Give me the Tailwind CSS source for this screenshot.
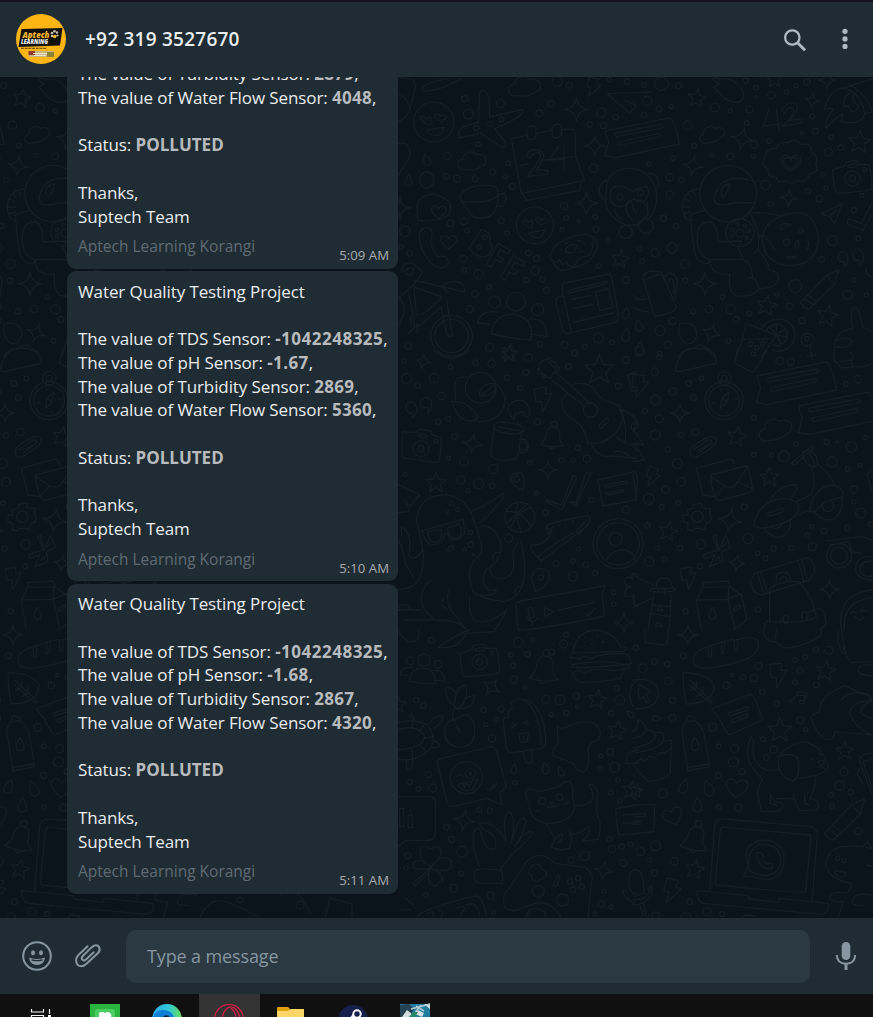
<!DOCTYPE html>
<html lang="en">
<head>
<meta charset="utf-8">
<title>+92 319 3527670</title>
<script src="https://cdn.jsdelivr.net/npm/@tailwindcss/browser@4"></script>
</head>
<body class="w-[873px] h-[1017px] overflow-hidden bg-[#0b141a] font-['Open_Sans','Noto_Sans',sans-serif]">
<div class="flex h-[1017px] w-[873px] flex-col">
  <header class="flex h-[77px] shrink-0 items-center border-t-2 border-[#15111c] bg-[#202c33] pl-4 pr-[18px]">
    <svg class="mb-[2px] size-[50px] shrink-0" viewBox="0 0 50 50">
      <circle cx="25" cy="25" r="25" fill="#fdb515"/>
      <path d="M5.500 15L46.500 14L44 31.500L2.500 33Z" fill="#11100d"/>
      <text x="6.500" y="23.500" font-size="8.500" font-weight="800" font-style="italic" fill="#f7b52c" textLength="27" lengthAdjust="spacingAndGlyphs">Aptech</text>
      <text x="5" y="30" font-size="6" font-weight="800" font-style="italic" fill="#eee" textLength="27" lengthAdjust="spacingAndGlyphs">LEARNING</text>
      <g fill="#c7c2ad"><circle cx="36" cy="19" r="1.300"/><circle cx="38.500" cy="17.200" r="1.300"/><circle cx="41" cy="18.500" r="1.200"/><circle cx="36" cy="22" r="1.200"/><circle cx="41.500" cy="21.500" r="1.100"/><circle cx="38.700" cy="22.500" r="1.800" fill="#fdb515"/></g>
      <path d="M5 34.300h26" stroke="#7d570c" stroke-width="1.200" stroke-dasharray="3 .7"/>
      <path d="M12.500 37H38v6H12.500z" fill="#c5b480"/><path d="M12.500 37H19v4h-6.500z" fill="#8d3b28"/><path d="M31 38h7v5h-7z" fill="#8b8432"/>
      <path d="M17 39.500h14M18 41.500h12" stroke="#eee8d7" stroke-width="1"/>
    </svg>
    <div class="ml-[19px] flex-1 whitespace-nowrap text-[19px] font-semibold tracking-[0.240px] text-[#e9edef]">+92 319 3527670</div>
    <svg class="mr-[28px] h-[24px] w-[24px]" viewBox="0 0 24 24" fill="none" stroke="#aebac1"><circle cx="9.300" cy="9.500" r="7.200" stroke-width="2.300"/><path d="M14.600 14.800L22 22.200" stroke-width="2.900"/></svg>
    <svg class="mb-[2px] h-[22px] w-[20px]" viewBox="0 0 20 22" fill="#aebac1"><circle cx="10" cy="3.300" r="2.600"/><circle cx="10" cy="10.900" r="2.600"/><circle cx="10" cy="18.400" r="2.600"/></svg>
  </header>

  <main class="relative h-[841px] shrink-0 overflow-hidden">
    <svg class="absolute inset-0" width="873" height="841" viewBox="0 77 873 841" fill="none" stroke="#161e25" stroke-linejoin="round" stroke-linecap="round">
      <defs>
        <path id="star" d="M0-30L8-9L30-7L13 7L19 29L0 17L-19 29L-13 7L-30-7L-8-9Z"/>
        <path id="spark" d="M0-36Q2-3 36 0Q3 4 0 36Q-3 4-36 0Q-3-3 0-36Z"/>
        <path id="drop" d="M0-22Q-26 20 0 22Q26 20 0-22Z"/>
        <path id="heart" d="M0 26Q-42-5-25-20Q-10-30 0-12Q10-30 25-20Q42-5 0 26Z"/>
        <path id="cloud" d="M-40 24C-60 5-42-10-30-8C-25-35 10-36 16-19C50-25 60 15 30 20C10 35-15 28-40 24Z"/>
        <path id="bolt" d="M-18-34L18-30L12-10L30-8L-10 40L-6 8L-22 5Z"/>
        <g id="bell"><path d="M-40 28Q-22 10-22-10Q-16-42 4-38Q28-35 25-5Q26 15 42 25Q10 40-40 28ZM-10 32q10 18 24 0"/><circle cx="3" cy="-47" r="10"/></g>
        <g id="camera"><path d="M-58-36L-20-42L-12-54L20-54L27-40L56-36Q64-32 58 40Q50 48-55 40Q-62 36-58-36Z"/><circle r="24"/><circle r="10"/><ellipse cx="6" cy="-39" rx="15" ry="5"/><circle cx="44" cy="-22" r="6"/></g>
        <g id="people"><circle r="28"/><path d="M-68 100Q-65 40-5 38Q60 45 50 112Q-5 112-68 100Z"/><circle cx="-64" cy="4" r="18"/><path d="M-75 72L-112 70Q-105 28-52 35M45 50Q92 40 98 100L52 94"/><circle cx="66" cy="20" r="18"/></g>
        <g id="note"><path d="M-110-30L90-70Q110-68 122 12L-80 55L-112 48L-100 5Q-108-10-110-30Z"/><path d="M-75-18L65-44M-65 10L58-16" stroke-width="15"/><path d="M-75-18L65-44M-65 10L58-16" stroke="#0b141a" stroke-width="8"/></g>
        <g id="love"><circle r="57"/><path d="M-10 10Q-42-5-37-15Q-28-20-22-9Q-10-20-7-7ZM22 0Q-4-15 5-23Q15-27 18-16Q34-26 36-13ZM-20 23Q10 18 30 15Q24 42 3 38Q-13 38-20 23Z"/></g>
        <g id="pencil"><path d="M-55 40L20-38L55-53L42-10L-28 57Q-42 63-55 40ZM20-38L42-10M-45 29L-18 48M-34 19L-8 38"/></g>
      </defs>
      <g id="doodles"></g>
      <use href="#doodles" x="-675"/>
      <g transform="translate(0 890)" stroke-width="1.300"><circle cx="240" cy="10" r="3"/><circle cx="300" cy="15" r="4"/><path d="M200 28q10-24 30-15t30 15M325 28l5-20l22 6v14M280 5q18-12 30 18"/></g>
    </svg>

    <div class="relative flex h-full flex-col justify-end gap-[2.500px] pb-[24.500px] pl-[67px]">
      <article class="flex h-[310px] w-[331px] shrink-0 flex-col whitespace-nowrap rounded-[9px] bg-[#202c33] px-[11px] pt-[8.500px] text-[17px] leading-[23.750px] tracking-[-0.100px] text-[#e9edef]">
        <p>Water Quality Testing Project</p><p>&nbsp;</p>
        <p>The value of TDS Sensor: <b class="tracking-[0.500px] text-[#b7bbbe]">-1042248325</b>,</p>
        <p>The value of pH Sensor: <b class="tracking-[0.400px] text-[#b7bbbe]">-1.66</b>,</p>
        <p>The value of Turbidity Sensor: <b class="tracking-[0.300px] text-[#b7bbbe]">2879</b>,</p>
        <p>The value of Water Flow Sensor: <b class="tracking-[0.300px] text-[#b7bbbe]">4048</b>,</p><p>&nbsp;</p>
        <p>Status: <b class="tracking-normal text-[#b7bbbe]">POLLUTED</b></p><p>&nbsp;</p>
        <p>Thanks,</p><p>Suptech Team</p>
        <div class="flex justify-between pt-[7px] tracking-normal"><span class="text-[15.500px] text-[#5f6b73]">Aptech Learning Korangi</span><span class="-mr-[2px] mt-[9px] text-[13.200px] text-[#a5abaf]">5:09 AM</span></div>
      </article>
      <article class="flex h-[310px] w-[331px] shrink-0 flex-col whitespace-nowrap rounded-[9px] bg-[#202c33] px-[11px] pt-[8.500px] text-[17px] leading-[23.750px] tracking-[-0.100px] text-[#e9edef]">
        <p>Water Quality Testing Project</p><p>&nbsp;</p>
        <p>The value of TDS Sensor: <b class="tracking-[0.500px] text-[#b7bbbe]">-1042248325</b>,</p>
        <p>The value of pH Sensor: <b class="tracking-[0.400px] text-[#b7bbbe]">-1.67</b>,</p>
        <p>The value of Turbidity Sensor: <b class="tracking-[0.300px] text-[#b7bbbe]">2869</b>,</p>
        <p>The value of Water Flow Sensor: <b class="tracking-[0.300px] text-[#b7bbbe]">5360</b>,</p><p>&nbsp;</p>
        <p>Status: <b class="tracking-normal text-[#b7bbbe]">POLLUTED</b></p><p>&nbsp;</p>
        <p>Thanks,</p><p>Suptech Team</p>
        <div class="flex justify-between pt-[7px] tracking-normal"><span class="text-[15.500px] text-[#5f6b73]">Aptech Learning Korangi</span><span class="-mr-[2px] mt-[9px] text-[13.200px] text-[#a5abaf]">5:10 AM</span></div>
      </article>
      <article class="flex h-[310px] w-[331px] shrink-0 flex-col whitespace-nowrap rounded-[9px] bg-[#202c33] px-[11px] pt-[8.500px] text-[17px] leading-[23.750px] tracking-[-0.100px] text-[#e9edef]">
        <p>Water Quality Testing Project</p><p>&nbsp;</p>
        <p>The value of TDS Sensor: <b class="tracking-[0.500px] text-[#b7bbbe]">-1042248325</b>,</p>
        <p>The value of pH Sensor: <b class="tracking-[0.400px] text-[#b7bbbe]">-1.68</b>,</p>
        <p>The value of Turbidity Sensor: <b class="tracking-[0.300px] text-[#b7bbbe]">2867</b>,</p>
        <p>The value of Water Flow Sensor: <b class="tracking-[0.300px] text-[#b7bbbe]">4320</b>,</p><p>&nbsp;</p>
        <p>Status: <b class="tracking-normal text-[#b7bbbe]">POLLUTED</b></p><p>&nbsp;</p>
        <p>Thanks,</p><p>Suptech Team</p>
        <div class="flex justify-between pt-[7px] tracking-normal"><span class="text-[15.500px] text-[#5f6b73]">Aptech Learning Korangi</span><span class="-mr-[2px] mt-[9px] text-[13.200px] text-[#a5abaf]">5:11 AM</span></div>
      </article>
    </div>
  </main>

  <footer class="flex h-[76px] shrink-0 items-center bg-[#202c33] pl-[22px] pr-[15px]">
    <svg class="size-[30px]" viewBox="0 0 30 30" fill="none" stroke="#8696a0"><circle cx="15" cy="15" r="13.800" stroke-width="2"/><ellipse cx="11" cy="11.700" rx="2" ry="2.500" fill="#8696a0" stroke="none"/><ellipse cx="19" cy="11.700" rx="2" ry="2.500" fill="#8696a0" stroke="none"/><path d="M7 16.500Q15 19.500 23 16.500Q22 24 15 24T7 16.500Z" fill="#8696a0" stroke="none"/><path d="M9.500 18.800Q15 20.500 20.500 18.800" stroke="#202c33" stroke-width="1.300"/></svg>
    <svg class="ml-[22px] h-[26px] w-[28px]" viewBox="0 0 28 26" fill="none" stroke="#8696a0" stroke-width="2" stroke-linecap="round"><path d="M13.500 3.200L4.500 12C0 16.500 2.500 23.200 7.200 23.200C9.500 23.200 11 22.300 12.500 20.800L23.800 10.300C27.500 6.500 25 2.300 22 2.300C20 2.300 18.800 3.200 17.500 4.400L8.800 13C6.300 15.800 9.200 19 12 16.500L19.700 9.200"/></svg>
    <div class="ml-6 flex h-[53px] w-[684px] items-center rounded-[10px] bg-[#2a3942] pl-[21px] text-[18px] tracking-[-0.130px] text-[#8696a0]">Type a message</div>
    <svg class="ml-[25px] h-[28px] w-[22px]" viewBox="0 0 22 28" fill="none" stroke="#8696a0"><rect x="6.700" y="0" width="8.600" height="18" rx="4.300" fill="#8696a0" stroke="none"/><path d="M1.800 13Q2 21.500 11 21.700Q20 21.500 20.200 13" stroke-width="2"/><path d="M11 21.500V28" stroke-width="3"/></svg>
  </footer>

  <div class="flex h-[23px] shrink-0 overflow-hidden bg-[#101010]">
    <svg width="873" height="23" viewBox="0 994 873 23">
      <path d="M199 994h61v23h-61z" fill="#333"/>
      <path d="M31.500 1009v3h12v-3M31.500 1017v-1.500h12v1.500M49.500 1009v5" fill="none" stroke="#f5f5f5" stroke-width="1.200"/><path d="M48 1015h3v2h-3z" fill="#fff"/>
      <path d="M90 1004h30v13H90z" fill="#28b43f"/><rect x="95" y="1009" width="20" height="10" rx="3" fill="#4dcc63"/><path d="M99 1017v-3q0-2 3-2q2 0 3 1q3-2 5 0q2 1 1 4z" fill="#fff"/>
      <defs><linearGradient id="e"><stop stop-color="#2ba9ea"/><stop offset=".55" stop-color="#31c8d9"/><stop offset="1" stop-color="#67df55"/></linearGradient></defs>
      <circle cx="167" cy="1019" r="15" fill="url(#e)"/><path d="M153 1017q3-8 11-7q8 1 10 7z" fill="#0d7fd4"/><path d="M163 1017q2-3 6-1v1z" fill="#0a2037"/>
      <g fill="none" stroke="#ed174a" stroke-width="1.200"><circle cx="229" cy="1019" r="14.500"/><ellipse cx="231" cy="1021" rx="9" ry="14"/><path d="M231 1008q4 3 5 9"/></g>
      <path d="M277 1017v-9q0-1 1-1h10l2 2v8z" fill="#e0a20c"/><path d="M277 1011h11l3-2h13v8h-27z" fill="#ffd566"/>
      <circle cx="353" cy="1020" r="15" fill="#17204c"/><circle cx="357" cy="1014" r="3.700" fill="none" stroke="#f5f5f5" stroke-width="2"/><path d="M353.500 1015l-2.500 3" stroke="#fff" stroke-width="2"/>
      <path d="M400 1004h30v13h-30z" fill="#227c9e"/><path d="M400 1005l9-1l5 5l-4 8h-10z" fill="#244252"/><path d="M402 1017l5-7l5 4l-3 3zM415 1014l3-4l6 3l-2 4zM424 1004h6v5z" fill="#d5dfdf"/><path d="M411 1009l19-5M416 1006l8 5M421 1005l-7 9" stroke="#b2cad2" stroke-width="1.500"/><path d="M412 1012h6l-3 5h-5z" fill="#26876a"/>
    </svg>
  </div>
</div>
<script>
// Each tile: origin, circles "x y r", symbols "name x y scale rotation", free paths.
const tiles = [
 {o:[398,77],
  c:"200 65 9,307 80 12,211 111 15,459 80 10,424 109 10,478 13 15,514 24 9,610 107 14,575 143 8,616 146 9,653 120 8,149 237 11,587 274 13,284 285 9,146 298 8,177 305 11,323 298 6,343 328 9,331 259 7,240 202 7,498 387 11,505 422 7,543 433 5,592 420 7,492 457 6,594 457 9,630 490 6,158 439 10,198 433 10,207 461 7,310 431 9,328 469 7,21 463 16,35 529 8,9 509 7,197 546 10,199 579 7,242 592 14,391 528 8,416 545 9,412 582 12,434 607 8,384 609 7,446 640 9,274 630 7,231 651 10,215 696 10,683 609 11,30 806 11,275 811 12,425 802 8,500 804 10,530 828 8,560 809 7,601 783 15,642 796 7,274 141 7,311 128 7,235 153 8,687 14 8,633 8 7,244 511 7,261 481 7,602 567 7,666 360 9,683 465 20",
  s:"love 107 135 1.05 0,love 411 445 .97 0,spark 535 97 1 0,spark 590 206 .85 0,spark 566 379 .95 0,spark 6 393 .85 0,star 667 545 .9 10,star 335 824 .85 15,cloud 222 252 .9 -5,cloud 380 28 1 -5,drop 86 248 .8 -20,drop 32 309 .8 5,drop 230 302 .6 -10,drop 684 708 .8 10,drop 684 773 .9 10,heart 152 495 .8 0,heart 122 405 .75 0,people 354 674 1 3,bolt 584 28 .8 10",
  p:"M75 42Q120 45 190 5M75 42Q60 20 150 5 M242 135L245 48Q260 25 273 65L275 120L370 98Q395 110 290 155L325 200Q325 215 310 210L248 168L185 183Q175 160 200 148Z M340 185L385 175M418 168L460 160M492 158L525 156Q535 160 532 238L560 310L370 350L340 185M368 265L390 260M430 250L530 238M375 350L385 370L545 340L548 318 M386 160q10-20 28-10v30q-15 15-25 2zM462 155q10-20 28-10v30q-15 15-25 2z M385 240Q390 212 420 220Q455 225 415 278L450 280L448 292L388 298Q430 250 428 230Q410 220 395 245Z M482 208L453 250L505 245M498 205V280 M185 365Q190 330 250 325Q310 320 298 355Q285 378 195 375ZM190 372L225 418Q240 428 270 420Q300 410 300 350M300 355q25-15 25 10q-10 30-30 22M60 425Q45 350 110 352Q165 365 157 405Q145 435 60 430ZM70 293a21 25 0 1 0 32 0a21 25 0 0 0-32 0 M64 470Q75 445 98 455Q108 470 97 495Q105 525 120 540Q145 530 153 555Q140 580 118 570Q65 540 64 470Z M250 457Q285 470 275 495Q290 515 270 535Q245 550 213 515ZM300 498L338 520L330 530L306 518L298 535L316 546L308 558L293 546L280 570L265 562ZM345 536L381 555L376 568L350 555L342 573L360 583L352 592L335 586L320 610L308 600Z M458 530Q480 480 560 472Q610 480 595 520Q575 570 490 580Q465 570 465 550Q450 545 458 530ZM465 550q10 15 20-2q10 25 20 5q10 30 30 5q5-20 30-20q20-5 20-50M502 525q5-30 35-20q-5 30-35 20M490 515v4M500 500l8-2M540 490l8 2M560 500l4 6M545 525l8-3 M10 580Q20 550 45 560L75 585L50 620L0 665M15 585Q45 560 48 585Q40 600 25 590M50 610L200 645Q200 610 165 615L140 618Q130 635 150 645M48 630L55 712Q70 725 132 660ZM30 640L50 740M145 665L163 775Q150 785 145 765L128 690L60 750Q25 740 45 710M30 770L60 740L55 770 M160 715a62 62 0 1 0 1 0M160 727a50 50 0 1 0 1 0M-10 650Q45 690-5 750M0 0L30 5Q60 10 50 40L35 100Q20 130-5 135M-5 50Q30 55 35 100M0 200Q40 190 35 240L0 295 M492 630Q490 620 500 618L630 592Q640 592 642 605L662 720Q660 735 650 737L520 767Q500 775 492 755L473 670Q475 655 495 658ZM497 658L520 767M510 640L625 613L627 620L515 648ZM520 668L578 655M525 695L585 682M530 735L645 708M593 645L630 635L645 692L605 700Z M628 50L760 45M628 50L695 108L715 85L680 70 M625 340Q625 280 690 274Q735 272 762 310M628 308Q590 325 612 365Q620 372 625 365M625 340Q610 410 680 442Q710 450 732 435M640 375Q625 325 665 327Q690 330 703 343Q725 330 745 330M640 375Q670 405 690 375Q715 355 745 385M690 375Q675 405 705 430M700 372L712 410M650 395Q650 415 670 428"},
 {o:[633,77],
  c:"85 20 20,32 24 7,137 26 9,43 71 14,78 96 9,115 89 6,33 114 8,163 145 13,183 206 7,292 102 6,246 92 13,349 97 11,341 138 7,338 11 8,369 32 7,368 61 4,415 55 11,461 44 7,489 26 6,522 15 9,538 118 8,507 170 5,547 163 9,595 180 7,623 212 8,586 225 12,363 203 11,408 192 7,361 238 6,236 235 6,292 238 10,119 244 7,48 260 7,109 301 11,145 309 8,110 354 12,91 424 9,129 447 8,39 447 22,66 527 12,20 515 7,27 552 7,117 513 15,157 561 14,156 611 8,398 324 14,413 381 8,525 343 8,559 365 10,579 332 6,571 292 6,687 355 6,662 400 8,676 484 7,598 491 15,566 547 9,663 609 6,700 654 6,644 654 14,487 627 19,431 652 6,470 688 10,293 697 14,228 696 11,269 660 7,180 703 8,309 727 9,348 710 7,507 731 9,118 732 11,81 761 15,104 803 11,286 791 7,523 788 19,521 785 7,80 830 7,353 801 7,371 812 6,389 800 6,361 830 6,22 347 9,314 442 5,335 446 5,345 462 5,341 482 5,297 458 5,297 477 5",
  s:"star 192 62 .9 10,star 680 193 1.1 5,star 401 684 1 10,star 584 714 1.05 12,star 425 5 .8 0,spark 328 185 .95 10,spark 180 266 .85 10,spark 467 363 .75 5,spark 216 620 1 0,spark 538 70 .65 10,spark 583 9 .75 0,cloud 237 172 .8 -15,heart 473 258 1 0,heart 473 258 .7 0,camera 658 304 .95 -8,pencil 560 634 1.05 0,drop 17 745 .8 -15,drop 20 813 .9 10,spark 235 767 .8 20,note 22 190 .95 0",
  p:"M285 265a85 85 0 1 0 1 0M368 315Q300 290 265 320Q235 355 248 378Q260 390 300 378L365 376M265 352Q260 325 290 320Q288 345 270 360Z M198 335Q150 340 148 390Q150 430 175 430M148 390h25M152 365l22 10M165 350l12 15M182 338l5 18M152 410l20-5 M215 400L172 412Q178 500 188 535Q195 560 225 560L232 548L330 547L315 510L325 492L255 495Q255 435 225 435Q190 440 193 490Q195 540 232 548Q230 595 290 592Q285 640 305 655Q360 665 378 635Q375 600 345 603M330 547Q360 560 358 602M350 410Q385 460 375 520L360 530M375 520Q400 540 410 580Q435 580 437 605Q430 635 378 635M355 408Q400 405 440 416M375 475L395 478 M320 425a42 42 0 1 0 1 0M320 456a12 12 0 1 0 1 0 M480 408Q550 400 557 490Q545 570 465 565Q390 560 388 480Q400 420 480 408ZM440 450q10-15 35-8q-20 5-30 18zM450 495q5-15 20-5q-5 30-20 5M495 465q5-20 15-5q-2 15-15 5M485 505q10-25 14-8q-5 30-14 8M520 490q15 0 0 30M400 485q15 10 25 35M460 540l30-2q-10 12-30 2 M395 245Q400 210 430 215Q440 190 465 198Q485 180 505 203Q535 195 535 225Q560 240 548 260Q560 290 530 290Q520 320 490 310Q475 330 460 310Q435 325 430 300Q400 300 405 275Q380 265 395 245Z M407 98L392 148L442 140M430 95L438 158M447 100Q460 70 490 80Q500 105 470 130L508 125L505 138L448 148Q490 110 480 95Q465 85 455 110Z M573 98Q590 35 630 33L720 5M573 98Q600 90 600 98Q570 140 580 155Q600 125 630 110L625 135Q690 145 695 110L718 105M645 20Q700 50 718 105M630 33Q685 45 695 110M650 50q-25 10-15 40q15-10 20 15q20 0 20-20q-25-15-10-35 M565 410L627 380L605 440L590 418L567 412M590 418L610 400M645 425L685 440L718 375M645 425L643 440L690 460L718 410M240 5Q245 15 260 20L242 30L275 65Q300 80 320 75Q340 60 325 35Q300 0 270 8L240 0M45 290Q75 285 78 325L65 345M57 310Q75 340 70 375Q65 415 42 430M40 325Q55 350 35 370Q20 380 0 365M42 375L45 410Q35 430 20 435 M30 605Q30 585 55 582L85 585L130 690Q125 710 65 718ZM30 610L85 590M90 605Q115 570 133 610L125 665M105 620Q115 590 123 620V650M0 655Q15 675 40 665M0 690Q25 705 48 705M140 740Q185 730 192 770Q185 805 160 800Q130 780 140 740M135 840Q150 815 180 815Q200 795 215 810Q245 825 248 840M340 740L430 775L385 840M340 740L312 840M330 787L410 785M430 727a48 48 0 1 1-10 92M430 742a32 32 0 1 1-10 62M430 727Q395 730 387 757M430 742Q405 745 400 762M430 773V745M430 773L455 757M430 773L460 780M430 773L445 800M410 750L430 773 M615 545q0-25 20-20q20 20 0 45q5-20-10-15zM660 535q0-25 20-18q25 25-2 50q5-25-10-15zM605 840Q595 760 660 755Q645 695 670 692Q680 700 690 750L718 765M608 790Q650 775 658 795Q650 815 610 810M700 575q-5 15 18 25M530 807l8 40"},
 {o:[398,350],
  c:"17 33 7,26 85 15,58 106 9,108 85 14,158 51 7,232 38 8,281 41 11,391 23 12,384 67 9,512 50 9,531 9 9,683 30 11,661 108 9,327 83 8,367 114 8,131 138 11,121 215 8,151 206 7,418 215 9,170 259 9,198 335 13,152 324 6,286 357 14,395 339 7,540 293 8,567 326 11,526 331 6,490 331 8,21 373 6,188 390 12,242 401 15,283 408 8,209 422 6,416 429 6,443 488 8,580 450 8,684 479 11,218 547 6,219 584 8,200 598 5,226 614 4,332 565 12,541 597 6,474 641 9,525 633 7,563 644 8,592 669 8,525 679 14,647 727 7,647 763 7,160 461 6,179 479 6,148 484 5,69 296 24,69 296 9,115 274 6,356 387 9,429 682 8,577 180 21,653 567 20,248 113 46,235 119 1,265 92 1",
  s:"spark 75 34 .65 10,spark 224 281 .85 8,spark 450 360 .75 0,star 604 56 1.45 0,star 114 396 1 0,star 335 10 .8 0,spark 678 817 .8 0,bell 463 262 .85 5,bolt 434 145 1 -15",
  p:"M15 245L55 248L62 238L100 243L103 255L130 262L125 330Q120 340 110 338L15 323Q10 320 15 245ZM60 257q15-10 30 2q-15 8-30-2 M205 82Q165 75 172 120V155Q215 155 240 205Q210 225 180 195L160 155L172 155M240 205Q225 220 270 212Q325 195 320 140Q310 110 292 100M245 140Q240 100 290 100Q300 135 245 140ZM245 140L285 108 M288 228Q290 210 340 220Q380 225 378 240Q370 258 320 248Q290 245 288 228ZM298 230L365 242M288 235L278 315Q290 335 335 330Q360 330 362 308L372 240M362 270Q385 260 392 285Q388 315 362 308M375 275a12 13 0 1 0 1 0 M330 175Q340 145 375 152Q395 160 395 195Q385 205 380 195Q375 180 360 190Q345 190 350 210Q330 195 330 175Z M422 52Q420 35 445 28L475 60L455 85Q430 75 422 52ZM473 65L575 160M455 85L560 170M445 28l10-5l5 12l12 0l0 12l12 5l-5 12M420 55v15l12 3l2 10l14-2 M523 105Q570 85 600 135Q610 150 660 165Q690 195 660 240Q620 290 570 278Q560 225 520 205Q485 180 492 145L510 130M605 225L625 205Q635 205 630 215L612 233Q600 235 605 225M580 285Q600 325 640 318L718 325M665 178Q720 190 710 240M665 178Q690 220 680 280L655 262M650 305Q680 300 700 325 M338 385Q342 365 370 370Q385 385 375 420Q345 410 338 385Z M445 450L490 465L525 378Q535 375 535 385L492 480L445 455ZM515 455L535 458L563 370Q575 360 578 372L533 468Z M600 390L710 365L718 378L715 450L615 468ZM620 405L685 393L688 400L622 412ZM623 430L672 418L676 425L630 435Z M365 457a45 45 0 1 0 1 0M323 485Q370 480 400 530M335 535Q370 470 400 475M360 458Q350 500 370 545M385 463Q350 500 325 520 M445 530Q440 520 570 497Q585 510 565 530L430 633Q390 595 400 585Q440 590 462 545ZM420 620Q480 570 535 545L565 510M535 545L542 555L575 515M445 530L450 555L465 530M485 525v5M504 518v5M525 513v5 M660 506a75 75 0 1 0 1 0M660 518a63 63 0 1 0 1 0M625 630Q645 595 680 600Q715 610 710 630 M400 685Q405 655 430 655Q460 660 453 690Q440 715 412 725Q410 710 400 685ZM353 765Q355 755 370 753L622 707L612 735L620 795Q610 805 400 838L360 840ZM438 772L465 785L442 800ZM483 780L590 757M562 790L570 798L590 775M390 775q10-10 15 5l3 20q-10 15-15-5zM385 800q15 25 35 5M403 815v10 M55 510Q65 430 150 435Q200 445 220 490Q235 530 248 575Q260 605 230 630Q205 660 220 710Q225 745 320 755Q385 735 380 645Q375 600 370 575Q345 580 345 625Q355 670 320 685Q280 690 273 655M250 527Q300 530 310 590Q305 640 265 658Q245 690 270 720L295 720Q290 740 240 735L225 725M55 510L75 600Q85 720 0 718M75 600Q45 640 32 615Q45 550 10 530V555M10 530M0 570Q15 590 22 640L48 685M100 690Q50 730 80 780L110 810Q190 810 205 840M155 715Q135 760 175 800L205 840M215 740Q210 790 230 810Q270 830 325 780Q320 800 290 840M0 780H70M15 810H110M72 542L195 508L200 550Q180 580 155 565L148 550L137 553Q140 580 105 585Q80 580 72 542ZM88 545L130 538Q135 575 108 578Q92 575 88 545ZM147 535L185 522Q200 560 170 565Q153 560 147 535M215 487Q260 470 315 430Q330 440 255 510L242 520M0 403L65 435L35 470L20 450L35 485L0 488M0 770q20-15 40 8M135 745q-10 25 12 30M285 635q-5-30 22-28M352 735q-5-25 20-28 M148 600q5-15 18-12q-5 22-18 12M105 0Q160 50 215 0M23 178q0-25 25-20q20 20-5 47q5-22-8-15zM67 165q0-25 22-22q25 15 0 48q5-25-10-16zM718 65L690 75L700 125L718 120M720 225q-20-20-20 10q10 15 20 15M718 280L700 282L718 305M718 675q-20-15-15 10q-20-10-25 10q10 20 20 15q-25 10-15 30q15 0 25-5q-5 30 12 35"},
 {o:[633,350],
  c:"21 4 14,79 21 8,66 65 11,119 125 11,167 100 9,205 85 7,181 142 9,67 150 15,36 183 8,79 206 12,67 255 15,144 256 8,187 246 11,104 298 8,133 341 15,144 396 13,97 419 11,47 447 16,86 471 8,135 460 7,43 527 8,74 593 7,140 595 8,49 635 14,94 628 7,203 583 14,201 649 8,193 500 17,334 471 9,363 314 7,415 315 6,453 319 16,363 204 7,440 32 11,473 36 10,489 281 7,581 277 8,614 275 3,655 291 16,698 262 6,597 336 15,644 357 7,681 346 6,663 419 11,663 455 6,683 489 15,644 534 8,573 544 9,536 529 6,523 556 7,345 566 15,374 610 7,397 625 7,422 596 8,475 594 8,538 590 12,713 523 7,674 88 11,638 102 7,158 784 8,375 778 8,274 85 20,274 85 9,273 152 57,273 152 46,585 468 17",
  s:"spark 141 189 .8 0,star 312 258 .95 10,star 409 380 .95 0,star 106 543 .95 12,spark 291 511 1 10,spark 590 718 .85 0,spark 312 639 .7 8,cloud 427 238 1.050 -15,note 485 108 1.02 0,note 610 198 1.02 0,bolt 18 105 .95 0,bolt 58 378 .8 12,bolt 165 682 .9 -15",
  p:"M128 55Q140 0 180-5Q230-10 248 25Q255 40 240 42L138 65Q125 65 128 55ZM315-10L305 40L360 68L402 0M262 175L267 145L288 125L283 155ZM267 145L283 155M237 160l8-2M302 148l12-3M280 182l2 8M264 115l2 8M520 20l30-5M605 10Q595 30 615 40Q620 60 660 50L655 30L620 35M650 5Q670 20 655 30M660 50Q690 55 718 40 M173 300Q175 285 230 260Q250 255 250 275Q245 290 190 322Q170 325 173 300ZM180 300L225 270Q240 270 235 280L195 310M195 300L232 282 M190 355L290 328Q300 325 304 345M190 355L210 435L245 440M232 375L338 348Q350 348 358 418L350 428L258 452Q240 445 232 375ZM235 380L275 408Q300 418 310 400L345 350M245 440L275 408M355 415L315 395 M180 475L182 463L205 460L207 472L220 475L232 475L230 493L235 500L232 515L220 520L215 540L200 535L185 535L180 543L163 540L165 520L150 515V495L165 495L162 478Z M248 555L240 560L255 600L215 612Q205 620 218 625L245 615L230 650L270 635L265 605L292 592L278 555L258 600ZM248 632l10-12l4 12M268 590l12-12 M362 525Q380 450 450 445Q505 450 495 485Q485 510 440 522Q375 545 362 525ZM405 490L445 475Q455 480 445 488L412 498Q402 495 405 490M410 450Q445 400 490 405Q495 420 473 448M535 345Q550 400 535 430Q520 445 490 455M550 340Q590 370 605 405M530 485Q540 410 600 405Q635 415 630 440L575 455L545 485ZM495 495L530 480M393 532Q410 565 440 562Q475 550 473 515M415 530Q432 545 448 522M545 485Q560 510 590 510Q630 500 628 445M475 340L540 285L540 295L485 345ZM510 305Q530 290 550 320Q560 345 545 352Q510 345 510 305M523 305q20 20 22 48 M190 750L210 710L210 698L285 693L292 710L325 735L342 810L300 840M190 750L205 840M190 750L285 748L305 835M285 748L325 730M215 712L288 710L285 748M238 772q-20 30 0 38q22-8 0-38M300 778l20-14l5 6l-20 15z M352 690L365 670L525 622Q545 630 545 665L530 690L385 735Q355 730 352 690ZM372 665L392 730M383 665L403 725M495 632L513 695M507 630L522 690M410 715Q450 690 495 695Q530 720 550 800Q530 820 410 815ZM430 695q-5-30 22-28q22 0 20 25M440 690q15-20 23 0M520 790L545 780M452 800q8-10 15 0v15q-10 15-16 0zM507 790q8-10 15 0v15q-10 15-16 0zM545 780Q565 770 575 790L580 820L562 838M410 810L395 820V840 M55 715L125 715Q135 730 50 725ZM70 710Q70 685 95 683Q115 685 118 710M75 713L78 730M95 715L95 732M62 735L45 840M115 735L108 840M55 765L112 770M50 790L110 800M73 782q5-20 18 0zM68 830q3-25 20 0zM0 675L60 705M0 772L55 745 M618 580a37 37 0 1 0 1 0M618 592a25 25 0 1 0 1 0M583 572L690 560L718 570M590 585L650 575L655 605L690 610M720 620Q670 615 668 655Q670 690 715 690M718 632Q680 635 680 660Q690 685 718 678M625 840Q610 730 718 720M635 840Q625 755 718 742M653 790q8-10 18 0M680 785q12-8 22 0M665 800q15 20 28 0M0 190Q25 230 10 235L0 235L32 285L5 280L35 330L0 335M700 375q10-10 18-10M703 375L718 430M0 375L10 440L0 450"},
 {o:[398,630],
  c:"100 31 9,361 37 14,404 29 6,339 74 7,389 72 8,345 107 8,347 149 11,380 173 5,504 14 7,497 42 12,460 67 9,55 211 8,76 227 9,257 240 8,264 284 6,294 268 6,309 237 9,282 325 11,444 208 12,486 210 15,535 198 9,537 230 5,505 249 8,460 254 6,656 175 8,666 211 15,640 249 8,637 365 10,608 378 6,606 415 7,650 412 15,92 434 9,35 456 8,61 477 7,104 474 12,351 458 7,244 540 7,276 542 8,145 592 8,161 628 9,29 677 9,24 713 7,192 665 16,189 731 7,167 775 12,84 796 7,278 797 11,287 847 6,519 690 9,560 678 14,660 449 7,638 488 7,665 512 7,634 627 8,642 657 11,671 650 8,698 643 7,677 699 10,618 784 6,610 822 10,640 831 6,591 852 6,421 784 18,494 810 18,516 754 8,541 744 8,525 779 8,551 770 8,205 443 48,217 431 15,217 431 4,433 513 10,484 502 10",
  s:"people 78 90 .64 0,camera 245 96 .95 -8,bell 438 118 1.050 5,spark 281 171 .8 35,star 598 207 .95 10,star 658 300 .95 10,star 700 480 .9 10,spark 198 571 .9 10,spark 617 721 .75 10,drop 348 416 .7 10,drop 442 414 .8 -15,drop 488 423 .7 -20,drop 696 252 .6 -45,star 0 222 .8 0",
  p:"M525 65Q535 5 590 0Q650 5 667 50L685 52Q688 65 665 65L525 68Q510 75 520 85Q530 80 545 88Q560 75 580 85Q610 70 680 70L695 82L700 100L680 105Q620 85 520 105L525 112Q580 115 690 102Q700 110 680 120L665 145Q625 155 550 158Q520 145 525 128Q545 115 560 130Q590 110 640 122Q670 120 690 115M557 32l2 4M598 18l4 4M580 40l3 5M622 15l4-3M613 38l4-4 M170 230Q140 205 143 172Q165 170 175 195Q180 170 202 165Q215 190 190 230Q170 240 168 225L175 190M190 230Q200 195 230 198Q230 235 175 238M172 230Q150 260 188 307M170 270Q140 270 140 310Q145 350 190 352Q240 345 228 280Q210 235 172 270 M338 218Q345 205 390 210Q440 240 443 330Q445 350 430 355L345 368Q330 370 325 355L315 268Q325 260 333 262Q325 245 345 235ZM378 210Q425 240 430 345M375 368L385 398Q395 405 403 395L400 360M342 280l12 5l-12 8M390 270l-12 8l14 5M360 312L392 308M365 318q-2 20 12 20q15-3 13-26M377 316v12 M478 288Q480 300 510 290Q540 270 585 278Q620 300 600 330Q560 345 572 370Q575 410 560 425Q540 430 525 400Q490 385 470 380Q455 365 480 340Z M118 400Q115 390 130 385L280 350Q290 350 297 365L325 470L305 490L312 525L265 505L165 530Q150 530 147 515ZM175 440q12-12 20 0M180 463L238 448Q230 480 210 482Q185 480 180 463M195 463l5 10l5-14l10 12l5-15M268 478l8 5l10-20M285 475l14-18 M-5 500H95Q112 500 112 520V610Q110 630 90 632H20L-5 655M5 535v55h12v-55zM30 555v38h13v-38zM37 540v3 M385 485Q380 470 425 485L485 470Q495 450 515 455Q530 475 522 500Q545 550 490 575Q430 590 405 560Q390 540 395 520Q380 500 385 485M442 580Q465 615 472 625L460 650Q480 665 515 655Q525 625 515 600M515 615Q550 610 572 590Q580 610 560 625Q545 635 565 632L600 628Q610 600 605 570Q590 550 600 490Q590 455 572 465Q585 480 585 500Q580 530 532 527M475 625q15-20 18-10q0 15-15 25M455 520q10-5 12 5q-5 8-12-5M445 527q10 12 20 2q10 5 18-5M412 542l12 1M502 523l10-7 M245 710Q215 640 230 598Q250 590 252 620Q270 670 290 655Q300 630 280 610Q245 595 245 580Q290 570 325 635Q310 550 335 545Q355 560 340 640Q355 570 378 563Q395 580 350 650Q385 600 402 605Q405 620 345 670L305 720M230 725Q235 710 310 722Q320 745 310 760H245Q225 755 230 725 M98 710Q65 690 65 660Q75 640 98 657Q120 640 130 665Q125 690 98 710ZM98 710Q60 680 47 700Q35 725 98 715ZM98 710Q140 665 160 695Q165 735 98 715ZM98 712Q80 755 110 770Q120 755 135 755Q135 730 100 715M98 715L45 760L50 768L95 725 M320 790Q340 770 385 695Q430 655 470 700L560 712Q590 730 580 760L570 865M320 790Q305 840 350 843L410 820Q460 810 488 862M385 865q5-40 45-25q15 10 12 25M400 710l15-8l12 5l5 12l12 3q5 20-10 22l-15 12l-18-8l0-12l-10-5zM480 735l7 3l-12 32l-10-3zM60 860Q55 845 200 805L235 798Q255 800 265 860M85 850l20-5v20M175 835q20-12 25 0l-15 25M205 825q30-15 40 30M120 840l15 5l-5 20M22 805l25 20M8 840l30-2 M40 265Q35 245 43 252L50 275M95 280Q115 250 135 260Q130 285 105 295M100 330Q135 340 120 352H98M28 388Q20 415 35 420Q48 410 42 385M0 278Q50 265 90 285Q125 340 80 370Q35 400 0 385M0 300Q60 280 80 320Q75 355 0 360M45 270L42 295M80 280L65 305M105 320L80 325M85 365L65 345M45 388L42 358M720 525L655 535Q650 540 662 615L718 610M675 555L718 553M675 580L718 578M718 720Q685 715 695 775Q705 795 718 790M675 780Q670 800 715 825M718 150Q680 180 705 230M720 360Q680 365 685 400H720M0 0Q30 55 62 25V0M120 52Q180 10 215 0M120 52Q180 60 205 10L290 5"},
 {o:[633,630],
  c:"8 53 8,29 115 13,65 94 9,103 102 8,151 77 9,106 153 11,119 211 9,280 166 10,298 135 5,330 142 8,363 144 11,376 108 11,388 186 8,431 221 8,549 58 8,588 61 12,517 81 7,486 90 7,501 122 9,486 157 7,550 164 9,502 270 11,518 299 6,118 264 10,239 292 12,257 349 7,305 356 12,301 396 15,327 425 9,257 436 9,390 328 7,422 359 11,400 382 9,633 426 12,620 467 14,653 487 8,594 495 7,597 529 7,90 490 14,257 532 7,317 533 11,677 603 11,22 665 12,68 647 15,49 690 7,65 729 9,124 694 12,170 815 9,222 845 12,268 852 8,68 857 11,536 387 2,614 685 6,634 692 6,158 862 14",
  s:"spark 165 15 .85 0,star 578 121 1 8,star 440 298 1.2 0,star 635 361 .9 0,star 186 716 .95 10,star 10 480 .7 10,drop 72 265 .6 90,drop 153 468 1 20,drop 226 474 1.1 -20,drop 193 524 1 0,drop 186 342 .9 0,bolt 434 133 1 -10,bolt 115 780 1 8,heart 311 474 1.1 5,heart 120 559 1 -20,bell 185 627 1 12,pencil 635 565 1.1 0",
  p:"M180 90Q180 65 225 50Q240 35 235 80Q225 90 225 50M260 40Q285 20 270 72Q262 75 268 38M300 35Q325 15 310 65Q302 70 305 32Q350 15 372 30Q390 60 340 88Q250 115 210 115Q180 110 180 90M225 50L265 38M272 35L300 28M35 0L38 38L95 45Q108 40 105 0M390 0Q400 40 425 35L450 52Q490 60 560 20L568 0M430 0L425 35 M150 128Q225 130 243 165Q245 220 160 222Q150 180 150 128ZM170 150L238 215L232 220L170 165M190 155v18L172 182M210 170v20L190 200 M235 237L350 193Q360 193 368 210L388 270L290 315Q280 310 258 265ZM285 250L345 230Q350 235 345 240L290 258ZM295 270L345 252V260L300 278Z M480 220q-15-5-10-10h10L497 185L522 188L512 220q-15 5-12-8h12L517 197L493 195 M0 150Q70 140 77 190Q70 240 5 235M15 185L20 165L55 185L40 193L50 215L42 218L32 200L20 210Z M160 275Q160 258 170 257L185 262V272Q205 285 213 310L230 410L165 423L147 305Q147 285 160 275ZM165 275L185 272M168 412L228 402 M0 305Q15 295 15 270Q35 275 40 300Q30 320 0 325M40 300Q70 300 65 325Q50 345 0 355M65 308Q100 300 90 335Q70 360 10 368M90 335L115 330L112 430Q95 450 45 455L0 405M5 400l20-15l10 8l15-15l15 5l15-15l15 2l15-12 M355 320Q335 360 350 400L388 450Q370 480 375 500L385 545H430Q450 540 450 520L425 515L410 490M355 320Q365 330 360 350Q355 395 390 415Q410 425 437 418M437 380Q465 340 520 335L550 352Q580 380 585 410Q580 435 500 445M437 380Q430 440 480 453Q505 440 495 385Q475 365 437 380M548 440Q545 480 532 505L545 510Q565 520 550 540L500 542Q485 520 482 490M430 505L482 507M412 495V520L430 525M515 495V520L530 525M555 370l10 5M555 395l12-5l7 8l-10 8zM555 412l10-4l10 8 M615 0Q610 60 640 75L630 50M625 0Q640 100 660 98L718 95M675 115L690 105H718M675 115Q670 135 718 138M535 265Q530 255 560 245Q555 200 635 167L680 188Q720 190 715 215Q680 225 685 250L718 268M625 210Q640 185 680 190Q720 195 708 212Q660 215 650 245Q660 290 718 315M535 265Q560 335 590 328Q605 325 605 305L718 315 M718 368Q675 375 680 395L718 495M718 385L690 395L718 475M680 415L672 430L688 460 M230 780L245 590Q250 565 275 567L535 590Q555 600 553 620L537 815M247 760L262 600Q265 590 275 592L530 615Q535 620 532 640L518 785Q515 792 250 765ZM190 782L345 797L348 807L435 817L440 805L585 820Q590 850 565 853L210 820Q190 810 190 782Z M332 740L345 705Q325 650 375 633Q430 620 452 670Q460 735 410 748Q380 750 360 738ZM350 722Q335 670 375 645Q425 635 442 675Q450 720 410 735Q385 740 362 728ZM370 670Q390 660 390 685Q390 700 405 702Q420 695 418 712Q400 725 385 705Q370 690 370 670Z M0 525L65 523L62 605L0 612M0 552L38 550V560L0 560M0 575L23 573V582L0 583M0 720Q35 710 32 790L5 800M55 765Q65 820 0 825M50 770Q50 810 0 810M20 825L30 858L38 855L32 820M718 655Q680 645 625 650Q575 665 580 710Q590 745 640 757L655 760Q660 775 640 790Q590 780 590 805Q605 820 630 815L615 865M605 722L640 728Q635 740 625 742Q605 740 605 722M685 650L705 635L715 655M718 795Q655 785 658 820Q670 830 690 825M700 705l18 5M330 865l5-10l30 2v8"}
];
const root = document.getElementById('doodles');
root.innerHTML = tiles.map(t => {
  const circles = t.c.split(',').map(v => { const [x,y,r] = v.split(' '); return `<circle cx="${x}" cy="${y}" r="${r}"/>`; }).join('');
  const marks = t.s.split(',').map(v => { const [n,x,y,s,a] = v.split(' '); return `<use href="#${n}" stroke-width="${4 / s}" transform="translate(${x} ${y}) rotate(${a}) scale(${s})"/>`; }).join('');
  return `<g transform="translate(${t.o}) scale(.33333)" stroke-width="4">${circles}${marks}<path d="${t.p}"/></g>`;
}).join('');
</script>
</body>
</html>
